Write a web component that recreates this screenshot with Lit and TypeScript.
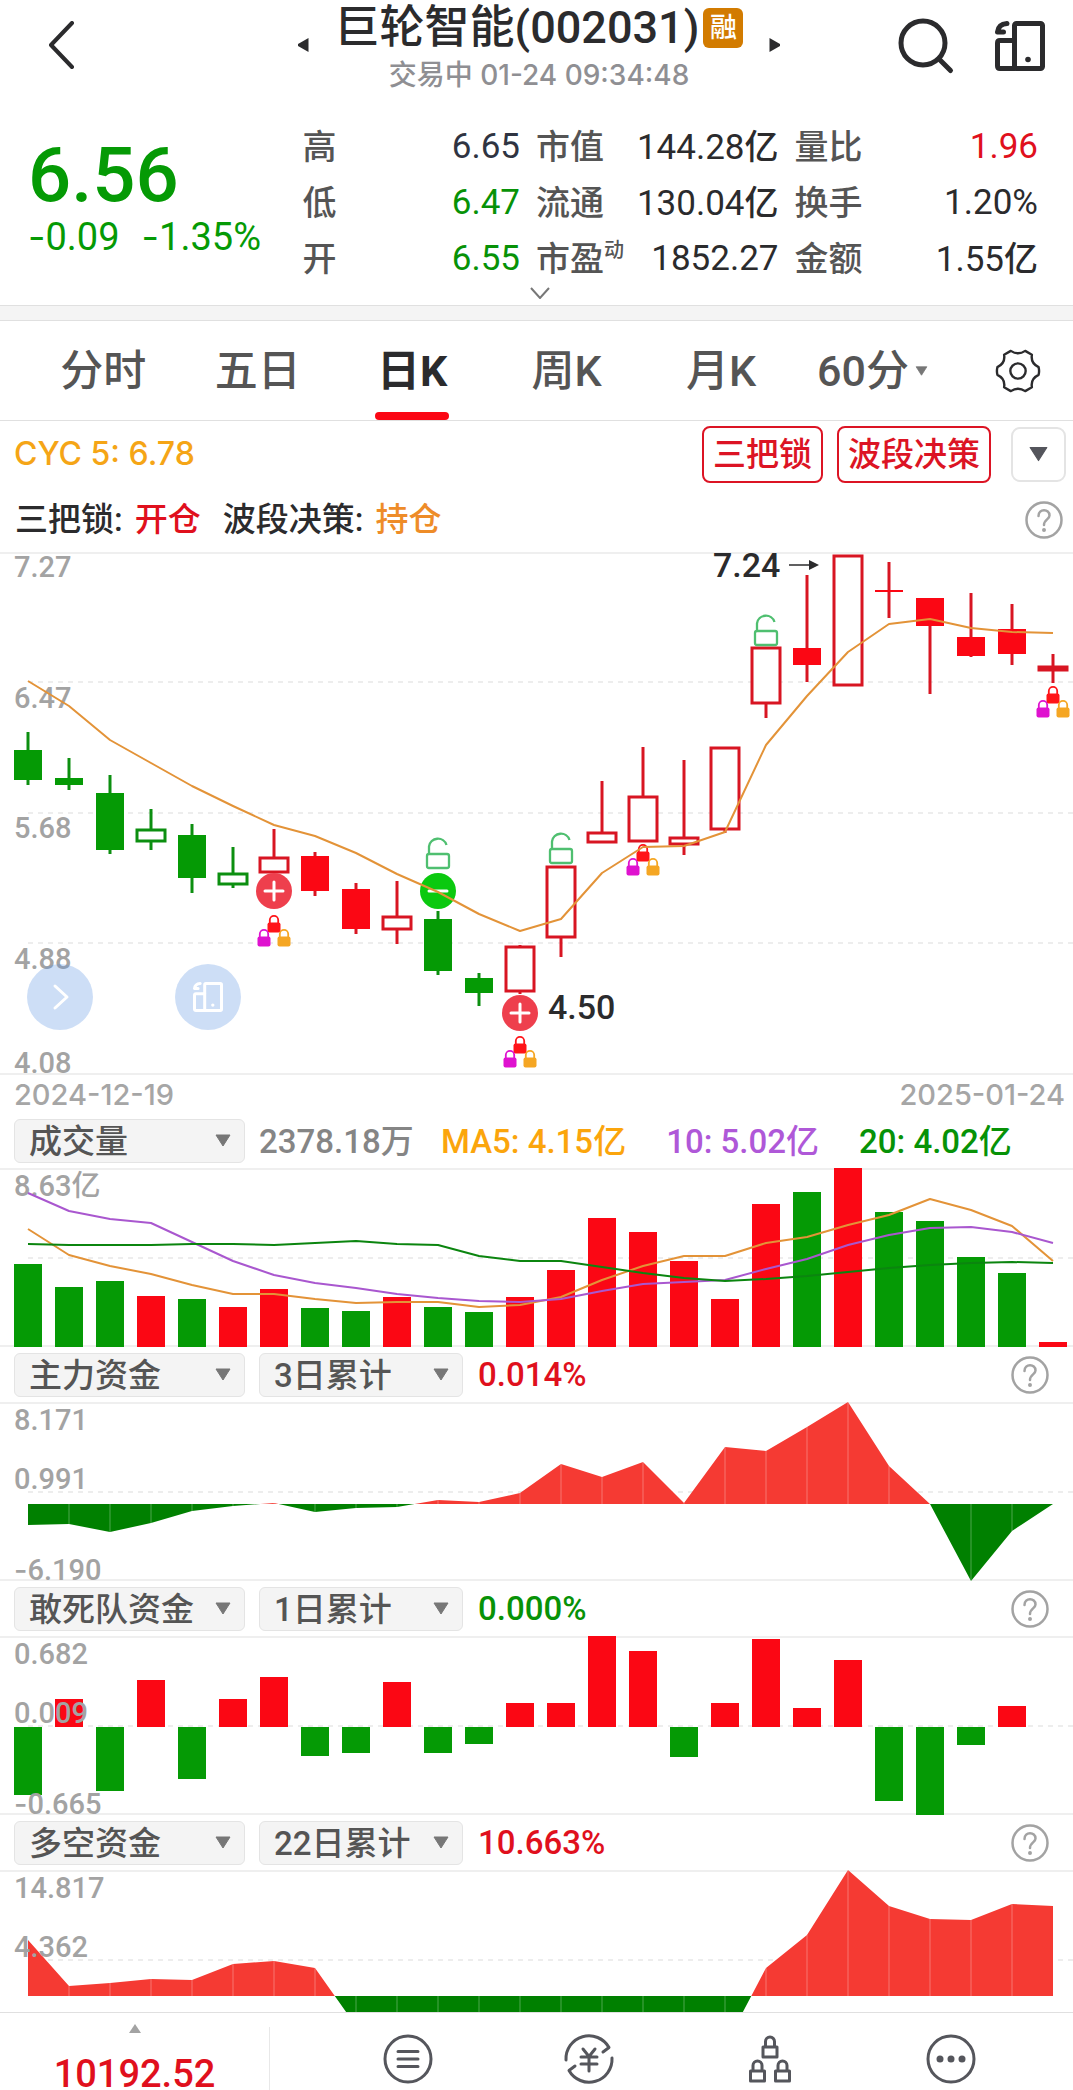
import { LitElement, html, svg, css, nothing, type TemplateResult } from "lit";
import { customElement, property, state } from "lit/decorators.js";
import { classMap } from "lit/directives/class-map.js";

type Tone = "up" | "down";
type Shape = "solid" | "hollow" | "cross";
type Candle = [tone: Tone, shape: Shape, high: number, top: number, bottom: number, low: number];

const STEP = 41;
const FIRST = 28;
const px = (i: number) => FIRST + STEP * i;
const join = (ys: number[]) => ys.map((y, i) => `${px(i)},${y}`).join(" ");

/* Price panel, vertical range 0 to 523 */
const candles: Candle[] = [
  ["down", "solid", 180, 198, 228, 233],
  ["down", "solid", 206, 226, 233, 238],
  ["down", "solid", 223, 241, 298, 302],
  ["down", "hollow", 257, 277, 290, 298],
  ["down", "solid", 272, 283, 326, 341],
  ["down", "hollow", 295, 321, 333, 336],
  ["up", "hollow", 277, 305, 321, 321],
  ["up", "solid", 300, 304, 339, 344],
  ["up", "solid", 331, 337, 377, 382],
  ["up", "hollow", 329, 364, 378, 392],
  ["down", "solid", 359, 367, 419, 423],
  ["down", "solid", 421, 426, 441, 454],
  ["up", "hollow", 393, 394, 440, 442],
  ["up", "hollow", 314, 314, 386, 405],
  ["up", "hollow", 229, 280, 291, 291],
  ["up", "hollow", 195, 244, 290, 290],
  ["up", "hollow", 208, 285, 293, 303],
  ["up", "hollow", 195, 195, 278, 281],
  ["up", "hollow", 95, 95, 152, 166],
  ["up", "solid", 23, 96, 113, 130],
  ["up", "hollow", 3, 3, 134, 134],
  ["up", "cross", 10, 38, 40, 66],
  ["up", "solid", 46, 46, 74, 142],
  ["up", "solid", 41, 85, 104, 105],
  ["up", "solid", 52, 77, 102, 113],
  ["up", "hollow", 102, 114, 119, 131],
];
const cyc = [129, 154, 188, 211, 234, 254, 273, 284, 301, 322, 340, 362, 379, 367, 321, 295, 294, 280, 193, 144, 100, 72, 67, 76, 80, 81];

/* Volume panel, vertical range 0 to 179 */
const volume: [Tone, number][] = [
  ["down", 96], ["down", 119], ["down", 113], ["up", 128], ["down", 131], ["up", 139], ["up", 121],
  ["down", 140], ["down", 143], ["up", 129], ["down", 139], ["down", 144], ["up", 129], ["up", 102],
  ["up", 50], ["up", 64], ["up", 93], ["up", 131], ["up", 36], ["down", 24], ["up", 0],
  ["down", 44], ["down", 53], ["down", 89], ["down", 105], ["up", 174],
];
const ma5 = [61, 87, 98, 106, 117, 126, 126, 131, 135, 134, 134, 139, 137, 129, 112, 98, 88, 88, 75, 69, 57, 47, 31, 42, 58, 93];
const ma10 = [25, 43, 51, 55, 74, 93, 107, 115, 120, 126, 130, 133, 134, 131, 123, 116, 114, 112, 101, 91, 77, 67, 60, 59, 64, 75];
const ma20 = [76, 77, 77, 77, 76, 76, 77, 75, 73, 76, 77, 88, 93, 93, 99, 105, 110, 113, 111, 108, 104, 100, 97, 95, 94, 95];

/* Capital flow panels */
const mainFlow = [123, 122, 130, 121, 109, 104, 101, 110, 106, 105, 98, 100, 91, 62, 75, 60, 101, 45, 49, 25, 0, 64, 102, 179, 129, 102];
const squadFlow = [159, 63, 155, 44, 143, 63, 41, 120, 117, 46, 117, 108, 67, 67, 0, 15, 121, 67, 3, 72, 24, 165, 179, 109, 70];
const longShort = [70, 116, 113, 109, 110, 94, 91, 98, 156, 190, 190, 190, 190, 190, 190, 190, 190, 176, 98, 65, 0, 36, 49, 50, 34, 36];

const bar = (i: number, y1: number, y2: number, tone: Tone) =>
  svg`<rect class=${tone} x=${px(i) - 14} y=${Math.min(y1, y2)} width="28" height=${Math.abs(y2 - y1)}></rect>`;

const label = (y: number, text: string, cls = "scale") =>
  text.startsWith("-")
    ? svg`<text class=${cls} x="14" y=${y}><tspan class="sign">-</tspan>${text.slice(1)}</text>`
    : svg`<text class=${cls} x="14" y=${y}>${text}</text>`;

const dashed = (y: number) => svg`<path class="dashed" d=${`M28 ${y}H1073`}></path>`;
const rule = (y: number) => svg`<path class="rule" d=${`M0 ${y}H1073`}></path>`;

const smallLock = (x: number, y: number, color: string) => svg`
  <g transform=${`translate(${x} ${y})`}>
    <path d="M-4.200 8V5a4.200 4.200 0 0 1 8.400 0V8" fill="none" stroke=${color} stroke-width="1.800"></path>
    <rect x="-6.500" y="7.500" width="13" height="10" rx="2" fill=${color}></rect>
  </g>`;

const tripleLock = (i: number, y: number) => svg`
  ${smallLock(px(i), y, "#ff1418")}
  ${smallLock(px(i) - 10, y + 14, "#df12cf")}
  ${smallLock(px(i) + 10, y + 14, "#f5a623")}`;

const openLock = (i: number, y: number) => svg`
  <g transform=${`translate(${px(i)} ${y})`} fill="none" stroke="#4fbf70" stroke-width="2.300">
    <rect x="-11" y="17" width="22" height="14" rx="2"></rect>
    <path d="M-9 17V9.500a9 9 0 0 1 17.500 -1.500"></path>
  </g>`;

const signal = (i: number, y: number, kind: "plus" | "minus") => svg`
  <g transform=${`translate(${px(i)} ${y})`}>
    <circle r="18" fill=${kind === "plus" ? "#ee3f4d" : "#0bc90f"}></circle>
    <path d=${kind === "plus" ? "M-9 0H9M0 -9V9" : "M-9 0H9"} stroke="#fff" stroke-width="3" stroke-linecap="round"></path>
  </g>`;

const phoneIcon = html`
  <svg class="phone" viewBox="0 0 50 50" aria-hidden="true">
    <g fill="none" stroke="currentColor" stroke-width="5" stroke-linejoin="round" stroke-linecap="round">
      <rect x="19.500" y="2.500" width="28" height="45" rx="2"></rect>
      <path d="M19.500 19.500H5Q2.500 19.500 2.500 22V45Q2.500 47.500 5 47.500H19.500"></path>
      <path d="M12 2.500C6 3 3 6 2.500 11H8.500"></path>
    </g>
    <circle cx="33" cy="38.500" r="2.800" fill="currentColor"></circle>
  </svg>`;

const caret = html`<svg class="caret" viewBox="0 0 16 13" aria-hidden="true"><path d="M1 1H15L8 12Z" fill="currentColor" stroke="currentColor" stroke-linejoin="round"></path></svg>`;

const shared = css`
  * { box-sizing: border-box; }
  button {
    font: inherit;
    color: inherit;
    background: none;
    border: 0;
    padding: 0;
    margin: 0;
    cursor: pointer;
  }
  svg { display: block; flex: none; }
  .sign { font-family: Inter, sans-serif; }
`;

@customElement("help-button")
class HelpButton extends LitElement {
  static styles = [
    shared,
    css`
      :host { display: block; color: #a3a3a3; }
      .help { display: block; }
      svg { width: 38px; height: 38px; }
    `,
  ];
  render() {
    return html`<button class="help" aria-label="帮助">
      <svg viewBox="0 0 38 38" fill="none" stroke="currentColor" stroke-width="2.500" stroke-linecap="round">
        <circle cx="19" cy="19" r="17.500"></circle>
        <path d="M13.500 15C13.500 7.500 24.500 7.500 24.500 14.500C24.500 18.500 19 18.500 19 24"></path>
        <circle cx="19" cy="29" r="1" fill="currentColor" stroke-width="2"></circle>
      </svg>
    </button>`;
  }
}

@customElement("pick-list")
class PickList extends LitElement {
  @property() name = "";
  @property({ attribute: false }) options: string[] = [];
  static styles = [
    shared,
    css`
      :host { display: block; }
      .pick { display: grid; align-items: center; }
      select {
        grid-area: 1 / 1;
        appearance: none;
        width: 100%;
        height: 44px;
        padding: 2px 16px 0 14px;
        border: 1px solid #e4e4e4;
        border-radius: 6px;
        background: #f4f4f4;
        color: #555;
        font: inherit;
        font-size: 33px;
        line-height: 40px;
      }
      .caret {
        grid-area: 1 / 1;
        justify-self: end;
        width: 16px;
        height: 13px;
        margin-right: 14px;
        color: #777;
        pointer-events: none;
      }
    `,
  ];
  render() {
    return html`<label class="pick">
      <select aria-label=${this.name}>
        ${this.options.map((o) => html`<option>${o}</option>`)}
      </select>
      ${caret}
    </label>`;
  }
}

@customElement("app-root")
class AppRoot extends LitElement {
  @state() private tab = 2;

  static styles = [
    shared,
    css`
      :host {
        display: block;
        background: #fff;
        color: #2b2b2d;
        font-family: Roboto, "Noto Sans CJK SC", sans-serif;
        font-weight: 500;
      }
      .red { color: #e0101d; }
      .green { color: #079207; }
      .slate { color: #2f3442; }

      header {
        display: grid;
        grid-template-columns: 1fr auto 1fr;
        align-items: center;
        height: 96px;
        padding: 0 28px 0 33px;
      }
      .back { justify-self: start; padding: 0 14px 6px; }
      .back svg { width: 28px; height: 48px; }
      .stock { display: flex; align-items: center; gap: 26px; }
      .step { padding-bottom: 6px; }
      .step svg { width: 12px; height: 16px; }
      .names { text-align: center; }
      h1 {
        display: flex;
        align-items: center;
        justify-content: center;
        gap: 4px;
        margin: 0;
        font-size: 45px;
        line-height: 54px;
        font-weight: 500;
      }
      .badge {
        width: 40px;
        height: 40px;
        border-radius: 6px;
        background: #d27b00;
        color: #fff;
        font-size: 27px;
        line-height: 40px;
        text-align: center;
      }
      .status {
        margin: 0;
        color: #8f8f93;
        font-family: Inter, "Noto Sans CJK SC", sans-serif;
        font-size: 28px;
        line-height: 40px;
      }
      .tools { display: flex; justify-content: flex-end; align-items: center; gap: 40px; padding-bottom: 5px; }
      .tools .search { width: 58px; height: 58px; }
      .tools .phone { width: 50px; height: 50px; }

      .quote {
        display: grid;
        grid-template-columns: 258fr 217fr 242fr 243fr;
        grid-template-rows: repeat(3, 56px);
        grid-auto-flow: column;
        column-gap: 16px;
        padding: 23px 35px 0 28px;
        margin: 0;
      }
      .last { grid-row: 1 / 4; padding-top: 16px; color: #059a05; }
      .price { font-size: 76px; line-height: 80px; }
      .change { display: flex; gap: 22px; font-size: 38px; line-height: 42px; font-weight: 400; white-space: nowrap; }
      .stat {
        display: flex;
        justify-content: space-between;
        align-items: center;
        font-size: 34px;
        line-height: 56px;
        white-space: nowrap;
      }
      .stat dt { color: #555; }
      .stat dd { margin: 0; font-size: 35px; font-weight: 400; }
      .unit { font-size: 34px; font-weight: 500; }
      .stat sup { font-size: 20px; line-height: 20px; vertical-align: 14px; }
      .more { display: grid; place-items: start center; width: 100%; height: 18px; padding-left: 6px; color: #777; }
      .more svg { width: 20px; height: 12px; }
      .band { height: 16px; background: #f4f4f4; border: solid #e0e0e0; border-width: 1px 0; }

      nav {
        display: grid;
        grid-template-columns: repeat(5, 154fr) 148fr 98fr;
        height: 100px;
        padding: 0 28px 0 26px;
        border-bottom: 1px solid #e0e0e0;
      }
      .tab {
        display: grid;
        grid-template-rows: 1fr 8px;
        justify-items: center;
        align-items: center;
        padding-top: 9px;
        color: #555;
        font-size: 43px;
        line-height: 50px;
      }
      .tab::after { content: ""; width: 74px; height: 8px; border-radius: 4px; }
      .tab.on { color: #2b2b2d; font-weight: 700; }
      .tab.on::after { background: #fb0714; }
      .period { display: flex; align-items: center; gap: 6px; }
      .period .caret { width: 13px; height: 10px; color: #777; }
      .gear { display: grid; place-items: center end; padding-right: 4px; }
      .gear svg { width: 46px; height: 46px; }

      .indicator {
        display: flex;
        align-items: center;
        height: 66px;
        padding: 0 7px 0 14px;
        font-size: 33px;
        line-height: 40px;
      }
      .indicator output { flex: 1; color: #f5a516; font-family: Inter, sans-serif; font-size: 32px; }
      .chip {
        height: 57px;
        padding: 2px 9px 0;
        margin-left: 14px;
        border: 2px solid #dc1424;
        border-radius: 8px;
        color: #dc1424;
      }
      .fold {
        display: grid;
        place-items: center;
        width: 55px;
        height: 55px;
        margin-left: 20px;
        border: 2px solid #e4e4e4;
        border-radius: 9px;
        color: #54555c;
      }
      .fold svg { width: 19px; height: 16px; }
      .advice {
        display: flex;
        align-items: center;
        height: 65px;
        padding: 0 10px 0 15px;
        font-size: 33px;
        line-height: 40px;
      }
      .advice p { display: flex; gap: 12px; margin: 0; padding-right: 22px; }
      .advice .hold { color: #ee8c28; }
      .advice help-button { margin-left: auto; }

      .stage { position: relative; }
      .plot { width: 100%; height: auto; overflow: visible; }
      .float {
        position: absolute;
        bottom: 45px;
        display: grid;
        place-items: center;
        width: 66px;
        height: 66px;
        border-radius: 50%;
        background: rgba(90, 145, 225, 0.3);
        color: #fff;
      }
      .float svg { width: 30px; height: 30px; }
      .next { left: 27px; }
      .rotate { left: 175px; }
      .dates {
        display: flex;
        justify-content: space-between;
        height: 38px;
        padding: 0 8px 0 14px;
        color: #a6a6a6;
        font-family: Inter, sans-serif;
        font-size: 29px;
        line-height: 40px;
      }

      .head {
        display: flex;
        align-items: center;
        height: 55px;
        padding: 0 24px 0 14px;
        font-size: 33px;
        line-height: 40px;
        white-space: nowrap;
      }
      .metric { width: 231px; }
      .span { width: 204px; margin: 0 15px 0 14px; }
      .head help-button { margin-left: auto; }
      .averages { display: flex; gap: 40px; padding: 2px 0 0 14px; }
      .vol { width: 142px; color: #858585; }
      .a5 { color: #fba50c; }
      .a10 { color: #af58d8; }

      .scale { fill: #a3a3a3; font: 500 29px Roboto, "Noto Sans CJK SC", sans-serif; }
      .callout { fill: #2b2b2d; font: 500 34px Roboto, sans-serif; }
      .dashed { stroke: #ededed; stroke-width: 2; stroke-dasharray: 5 5; fill: none; }
      .rule { stroke: #efefef; stroke-width: 2; fill: none; }
      .up { fill: #fb0714; }
      .down { fill: #059a05; }
      .wick-up { stroke: #d81522; stroke-width: 3; fill: #fff; }
      .wick-down { stroke: #0c8f10; stroke-width: 3; fill: #fff; }
      .line { fill: none; stroke-width: 2; stroke-linejoin: round; }
      .orange { stroke: #e39338; }
      .purple { stroke: #a957cf; }
      .forest { stroke: #0b850f; }
      .area-up { fill: #f53a33; }
      .area-down { fill: #008000; }
      .seam { stroke: #fff; stroke-opacity: 0.3; }

      footer {
        display: flex;
        align-items: stretch;
        height: 78px;
        border-top: 1px solid #e0e0e0;
      }
      .index {
        display: grid;
        justify-items: center;
        align-content: start;
        width: 269px;
        padding-top: 11px;
        gap: 21px;
        color: #e0101d;
        font-size: 38px;
        line-height: 40px;
      }
      .index svg { width: 12px; height: 9px; color: #a3a3a3; }
      .actions {
        display: grid;
        grid-template-columns: repeat(4, 1fr);
        flex: 1;
        margin-top: 14px;
        padding: 0 31px 0 47px;
        border-left: 1px solid #e8e8e8;
        color: #55565c;
      }
      .actions button { display: grid; place-items: center; }
      .actions svg { width: 50px; height: 50px; overflow: visible; }
    `,
  ];

  private stat(name: string, value: string, tone = "", mark = "") {
    const unit = value.endsWith("亿");
    return html`<div class="stat">
      <dt>${name}${mark ? html`<sup>${mark}</sup>` : nothing}</dt>
      <dd class=${tone}>${unit ? html`${value.slice(0, -1)}<span class="unit">亿</span>` : value}</dd>
    </div>`;
  }

  private candle([tone, shape, high, top, bottom, low]: Candle, i: number) {
    const x = px(i);
    const body =
      shape === "solid"
        ? svg`<rect class=${tone} x=${x - 14} y=${top} width="28" height=${bottom - top}></rect>`
        : shape === "cross"
          ? svg`<rect class=${tone} x=${x - 14} y=${top} width="28" height="2"></rect>`
          : svg`<rect class=${`wick-${tone}`} x=${x - 14} y=${top + 1} width="28" height=${bottom - top - 2}></rect>`;
    return svg`<path class=${`wick-${tone}`} d=${`M${x} ${high}V${low}`}></path>${body}`;
  }

  private area(id: string, ys: number[], zero: number, height: number) {
    const points = `${px(0)},${zero} ${join(ys)} ${px(25)},${zero}`;
    return svg`
      <defs>
        <clipPath id=${id + "-a"}><rect x="0" y="0" width="1073" height=${zero}></rect></clipPath>
        <clipPath id=${id + "-b"}><rect x="0" y=${zero} width="1073" height=${height - zero}></rect></clipPath>
      </defs>
      <polygon class="area-up" points=${points} clip-path=${`url(#${id}-a)`}></polygon>
      <polygon class="area-down" points=${points} clip-path=${`url(#${id}-b)`}></polygon>
      ${ys.map((y, i) => (i && i < 25 ? svg`<path class="seam" d=${`M${px(i)} ${zero}V${Math.min(y, height)}`}></path>` : nothing))}`;
  }

  private panel(metric: string, span: string, value: string, tone: string, height: number, content: TemplateResult) {
    return html`<section>
      <div class="head">
        <pick-list class="metric" name="指标" .options=${[metric]}></pick-list>
        <pick-list class="span" name="周期" .options=${[span]}></pick-list>
        <output class=${tone}>${value}</output>
        <help-button></help-button>
      </div>
      <svg class="plot" viewBox=${`0 0 1073 ${height}`} role="img" aria-label=${metric}>${content}</svg>
    </section>`;
  }

  render() {
    const tabs = ["分时", "五日", "日K", "周K", "月K"];
    return html`
      <header>
        <button class="back" aria-label="返回">
          <svg viewBox="0 0 28 48"><path d="M25 2L4 24L25 46" fill="none" stroke="currentColor" stroke-width="4" stroke-linecap="round" stroke-linejoin="round"></path></svg>
        </button>
        <div class="stock">
          <button class="step" aria-label="上一只">
            <svg viewBox="0 0 12 16"><path d="M11.500 1V15L1 9V7Z" fill="currentColor"></path></svg>
          </button>
          <div class="names">
            <h1>巨轮智能(002031)<span class="badge">融</span></h1>
            <p class="status">交易中 01-24 09:34:48</p>
          </div>
          <button class="step" aria-label="下一只">
            <svg viewBox="0 0 12 16"><path d="M0.500 1V15L11 9V7Z" fill="currentColor"></path></svg>
          </button>
        </div>
        <div class="tools">
          <button aria-label="搜索">
            <svg class="search" viewBox="0 0 58 58" fill="none" stroke="currentColor" stroke-width="5" stroke-linecap="round">
              <circle cx="26" cy="26" r="22"></circle>
              <path d="M42 42L53.500 53.500"></path>
            </svg>
          </button>
          <button aria-label="横屏">${phoneIcon}</button>
        </div>
      </header>

      <dl class="quote">
        <div class="last">
          <div class="price">6.56</div>
          <div class="change"><span><span class="sign">-</span>0.09</span><span><span class="sign">-</span>1.35%</span></div>
        </div>
        ${this.stat("高", "6.65", "slate")} ${this.stat("低", "6.47", "green")} ${this.stat("开", "6.55", "green")}
        ${this.stat("市值", "144.28亿")} ${this.stat("流通", "130.04亿")} ${this.stat("市盈", "1852.27", "", "动")}
        ${this.stat("量比", "1.96", "red")} ${this.stat("换手", "1.20%")} ${this.stat("金额", "1.55亿")}
      </dl>
      <button class="more" aria-label="展开">
        <svg viewBox="0 0 20 12"><path d="M1 1L10 11L19 1" fill="none" stroke="currentColor" stroke-width="2"></path></svg>
      </button>
      <div class="band"></div>

      <nav>
        ${tabs.map(
          (t, i) => html`<button class=${classMap({ tab: true, on: this.tab === i })} @click=${() => (this.tab = i)}>${t}</button>`,
        )}
        <button class="tab"><span class="period">60分 ${caret}</span></button>
        <button class="gear" aria-label="设置">
          <svg viewBox="0 0 48 48" fill="none" stroke="currentColor" stroke-width="2.500" stroke-linejoin="round">
            <path d="M16.500 3Q24 8 31.500 3L38.500 7Q37 16 45.500 20Q46.500 24 45.500 28Q37 32 38.500 41L31.500 45Q24 40 16.500 45L9.500 41Q11 32 2.500 28Q1.500 24 2.500 20Q11 16 9.500 7Z"></path>
            <circle cx="24" cy="24" r="8"></circle>
          </svg>
        </button>
      </nav>

      <div class="indicator">
        <output>CYC 5: 6.78</output>
        <button class="chip">三把锁</button>
        <button class="chip">波段决策</button>
        <button class="fold" aria-label="更多指标">${caret}</button>
      </div>
      <div class="advice">
        <p><span>三把锁:</span><span class="red">开仓</span></p>
        <p><span>波段决策:</span><span class="hold">持仓</span></p>
        <help-button></help-button>
      </div>

      <div class="stage">
        <svg class="plot" viewBox="0 0 1073 523" role="img" aria-label="日K">
          ${rule(1)} ${dashed(130)} ${dashed(261)} ${dashed(391)} ${rule(522)}
          ${label(25, "7.27")} ${label(156, "6.47")} ${label(286, "5.68")} ${label(417, "4.88")} ${label(521, "4.08")}
          ${candles.map((c, i) => this.candle(c, i))}
          ${signal(6, 339, "plus")} ${signal(10, 339, "minus")} ${signal(12, 461, "plus")}
          ${openLock(10, 285)} ${openLock(13, 280)} ${openLock(18, 62)}
          ${tripleLock(6, 363)} ${tripleLock(12, 484)} ${tripleLock(15, 292)} ${tripleLock(25, 134)}
          <polyline class="line orange" points=${join(cyc)}></polyline>
          <text class="callout" x="713" y="25">7.24</text>
          <path d="M789 13H812" stroke="#2b2b2d" stroke-width="1.500"></path>
          <path d="M809 8V18L819 13Z" fill="#2b2b2d"></path>
          <text class="callout" x="548" y="467">4.50</text>
        </svg>
        <button class="float next" aria-label="展开工具">
          <svg viewBox="0 0 30 30"><path d="M10 4L22 15L10 26" fill="none" stroke="currentColor" stroke-width="3" stroke-linecap="round" stroke-linejoin="round"></path></svg>
        </button>
        <button class="float rotate" aria-label="横屏查看">${phoneIcon}</button>
      </div>
      <div class="dates"><time>2024-12-19</time><time>2025-01-24</time></div>

      <section>
        <div class="head">
          <pick-list class="metric" name="指标" .options=${["成交量"]}></pick-list>
          <div class="averages">
            <span class="vol">2378.18万</span>
            <span class="a5">MA5: 4.15亿</span>
            <span class="a10">10: 5.02亿</span>
            <span class="green">20: 4.02亿</span>
          </div>
        </div>
        <svg class="plot" viewBox="0 0 1073 179" role="img" aria-label="成交量">
          ${rule(1)} ${dashed(90)} ${rule(178)} ${label(28, "8.63亿")}
          ${volume.map(([tone, top], i) => bar(i, top, 179, tone))}
          <polyline class="line orange" points=${join(ma5)}></polyline>
          <polyline class="line purple" points=${join(ma10)}></polyline>
          <polyline class="line forest" points=${join(ma20)}></polyline>
        </svg>
      </section>

      ${this.panel("主力资金", "3日累计", "0.014%", "red", 179, svg`
        ${rule(1)} ${dashed(90)} ${rule(178)}
        ${this.area("main", mainFlow, 102, 179)}
        ${label(28, "8.171")} ${label(87, "0.991")} ${label(178, "-6.190")}`)}
      ${this.panel("敢死队资金", "1日累计", "0.000%", "green", 179, svg`
        ${rule(1)} ${dashed(90)} ${rule(178)}
        ${squadFlow.map((y, i) => bar(i, 91, y, y < 91 ? "up" : "down"))}
        ${label(28, "0.682")} ${label(87, "0.009")} ${label(178, "-0.665")}`)}
      ${this.panel("多空资金", "22日累计", "10.663%", "red", 142, svg`
        ${rule(1)} ${dashed(90)}
        ${this.area("ls", longShort, 126, 142)}
        ${label(28, "14.817")} ${label(87, "4.362")}`)}

      <footer>
        <button class="index">
          <svg viewBox="0 0 12 9"><path d="M6 0L12 9H0Z" fill="currentColor"></path></svg>
          <span>10192.52</span>
        </button>
        <div class="actions">
          <button aria-label="列表">
            <svg viewBox="0 0 50 50" fill="none" stroke="currentColor" stroke-width="3" stroke-linecap="round">
              <circle cx="25" cy="25" r="23"></circle>
              <path d="M15 17.500H35M15 25H35M15 32.500H35"></path>
            </svg>
          </button>
          <button aria-label="交易">
            <svg viewBox="0 0 50 50" fill="none" stroke="currentColor" stroke-width="3" stroke-linecap="round" stroke-linejoin="round">
              <path d="M2 26A23 23 0 0 1 45 13.500L39 18"></path>
              <path d="M48 24A23 23 0 0 1 5 36.500L11 32"></path>
              <path d="M19 15L25 22.500L31 15M25 22.500V37M17 23H33M17 30H33"></path>
            </svg>
          </button>
          <button aria-label="三把锁">
            <svg viewBox="0 0 50 50" fill="none" stroke="currentColor" stroke-width="3" stroke-linejoin="round">
              <rect x="18" y="13" width="14" height="10"></rect>
              <path d="M20.500 13V7.500a4.500 4.500 0 0 1 9 0V13"></path>
              <rect x="5.500" y="37" width="14" height="10"></rect>
              <path d="M8 37V31.500a4.500 4.500 0 0 1 9 0V37"></path>
              <rect x="30.500" y="37" width="14" height="10"></rect>
              <path d="M33 37V31.500a4.500 4.500 0 0 1 9 0V37"></path>
            </svg>
          </button>
          <button aria-label="更多">
            <svg viewBox="0 0 50 50" fill="currentColor">
              <circle cx="25" cy="25" r="23" fill="none" stroke="currentColor" stroke-width="3"></circle>
              <circle cx="14" cy="25" r="3.500"></circle>
              <circle cx="25" cy="25" r="3.500"></circle>
              <circle cx="36" cy="25" r="3.500"></circle>
            </svg>
          </button>
        </div>
      </footer>
    `;
  }
}
